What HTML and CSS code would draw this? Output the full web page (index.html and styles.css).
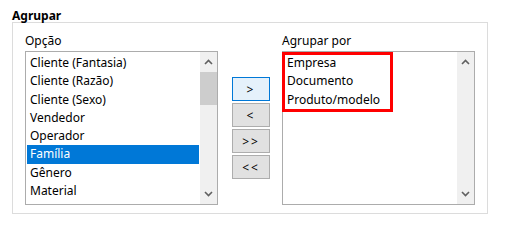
FILE: index.html
```html
<!DOCTYPE html>
<html>
<head>
    <title>Agrupar</title>
    <link rel="stylesheet" href="styles.css">
</head>
<body>
    <div class="title">Agrupar</div>
    <div class="group">
        <div class="col">
            <div class="label">Opção</div>
            <div class="list">
                <ul class="items">
                    <li>Cliente (Fantasia)</li>
                    <li>Cliente (Razão)</li>
                    <li>Cliente (Sexo)</li>
                    <li>Vendedor</li>
                    <li>Operador</li>
                    <li class="selected">Família</li>
                    <li>Gênero</li>
                    <li>Material</li>
                </ul>
                <div class="scroll">
                    <svg class="arrow" width="9" height="6" viewBox="0 0 9 6"><path d="M1 5 L4.5 1.5 L8 5" fill="none" stroke="#606060" stroke-width="1.6"/></svg>
                    <div class="track"><div class="thumb"></div></div>
                    <svg class="arrow" width="9" height="6" viewBox="0 0 9 6"><path d="M1 1 L4.5 4.5 L8 1" fill="none" stroke="#606060" stroke-width="1.6"/></svg>
                </div>
            </div>
        </div>

        <div class="buttons">
            <button class="focused">&gt;</button>
            <button>&lt;</button>
            <button>&gt;&gt;</button>
            <button>&lt;&lt;</button>
        </div>

        <div class="col">
            <div class="label">Agrupar por</div>
            <div class="list">
                <ul class="items">
                    <li>Empresa</li>
                    <li>Documento</li>
                    <li>Produto/modelo</li>
                </ul>
                <div class="scroll">
                    <svg class="arrow" width="9" height="6" viewBox="0 0 9 6"><path d="M1 5 L4.5 1.5 L8 5" fill="none" stroke="#606060" stroke-width="1.6"/></svg>
                    <div class="track"></div>
                    <svg class="arrow" width="9" height="6" viewBox="0 0 9 6"><path d="M1 1 L4.5 4.5 L8 1" fill="none" stroke="#606060" stroke-width="1.6"/></svg>
                </div>
                <div class="highlight"></div>
            </div>
        </div>
    </div>
</body>
</html>
```

FILE: styles.css
```css
body {
    margin: 0;
    background: #ffffff;
    color: #000000;
    font-family: 'Noto Sans', 'Open Sans', sans-serif;
    font-size: 12px;
}

.title {
    margin: 9px 0 0 12px;
    height: 13px;
    line-height: 13px;
    font-weight: bold;
}

.group {
    display: flex;
    margin-left: 12px;
    width: 474px;
    height: 190px;
    border: 1px solid #dcdcdc;
}

.col {
    display: flex;
    flex-direction: column;
    margin-left: 12px;
}

.label {
    height: 18px;
    padding-top: 10px;
    line-height: 16px;
}

.list {
    position: relative;
    display: flex;
    width: 191px;
    height: 152px;
    border: 1px solid #acacac;
    background: #ffffff;
}

.items {
    flex: 1;
    list-style: none;
    margin: 0;
    padding: 2px 1px 0 1px;
}

.items li {
    height: 18.3px;
    line-height: 18px;
    padding-left: 3px;
    white-space: nowrap;
}

.items li.selected {
    background: #0078d7;
    color: #ffffff;
}

.scroll {
    display: flex;
    flex-direction: column;
    align-items: center;
    width: 17px;
    background: #f0f0f0;
}

.arrow {
    margin: 7px 0;
}

.track {
    flex: 1;
    align-self: stretch;
}

.thumb {
    height: 33px;
    background: #cdcdcd;
}

.buttons {
    display: flex;
    flex-direction: column;
    gap: 2px;
    margin: 54px 0 0 14px;
}

button {
    width: 38px;
    height: 24px;
    padding: 0;
    background: #e1e1e1;
    border: 1px solid #adadad;
    font-family: 'Noto Sans', 'Open Sans', sans-serif;
    font-size: 12px;
    letter-spacing: 2px;
    color: #000000;
}

button.focused {
    background: #e5f1fb;
    border-color: #0078d7;
}

.highlight {
    position: absolute;
    left: -1px;
    top: 0;
    width: 105px;
    height: 54px;
    border: 3px solid #ff0000;
}
```
